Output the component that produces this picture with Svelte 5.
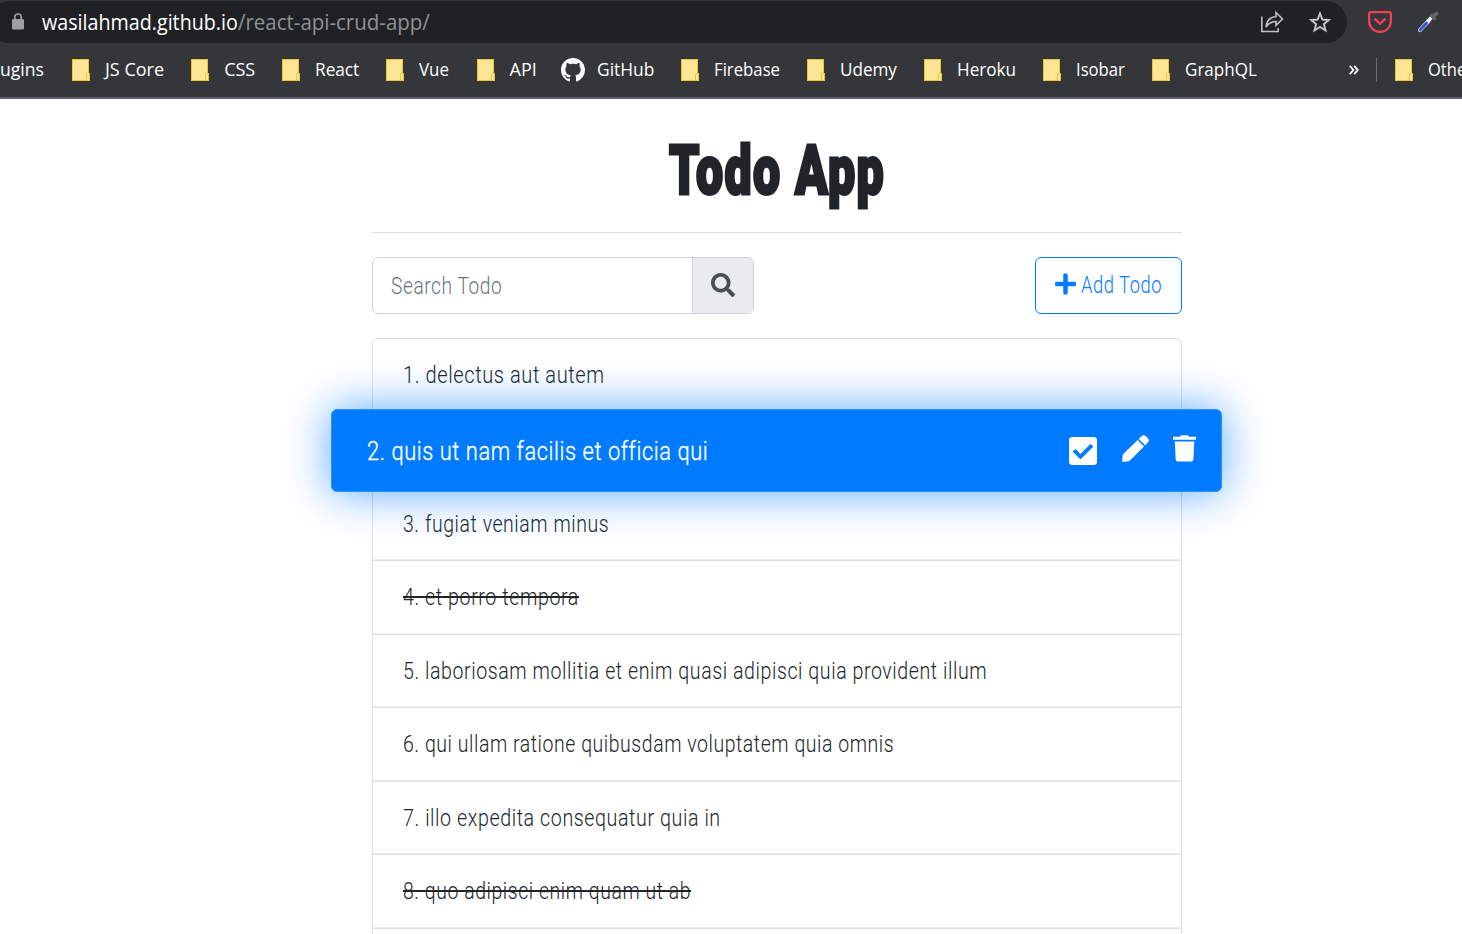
<script>
  const bookmarks = [
    { label: 'JS Core', w: 59 },
    { label: 'CSS', w: 31 },
    { label: 'React', w: 44 },
    { label: 'Vue', w: 30 },
    { label: 'API', w: 27 },
    { label: 'GitHub', w: 57, github: true },
    { label: 'Firebase', w: 66 },
    { label: 'Udemy', w: 57 },
    { label: 'Heroku', w: 59 },
    { label: 'Isobar', w: 49 },
    { label: 'GraphQL', w: 72 }
  ];

  const todos = [
    { text: '1. delectus aut autem', w: 202 },
    { text: '2. quis ut nam facilis et officia qui', w: 341, active: true },
    { text: '3. fugiat veniam minus', w: 206 },
    { text: '4. et porro tempora', w: 176, done: true },
    { text: '5. laboriosam mollitia et enim quasi adipisci quia provident illum', w: 584 },
    { text: '6. qui ullam ratione quibusdam voluptatem quia omnis', w: 491 },
    { text: '7. illo expedita consequatur quia in', w: 318 },
    { text: '8. quo adipisci enim quam ut ab', w: 288, done: true },
    { text: '', w: 0 }
  ];

  // Condenses a label horizontally so that it fills the given width.
  function fit(node, width) {
    const natural = node.offsetWidth;
    if (natural && width) node.style.transform = `scaleX(${width / natural})`;
    node.parentElement.style.width = `${width}px`;
  }
</script>

{#snippet label(text, w)}
  <span class="fit"><span class="fit-in" use:fit={w}>{text}</span></span>
{/snippet}

{#snippet folder()}
  <svg class="folder" width="18" height="22" viewBox="0 0 18 22">
    <path d="M0 0H17V14H18V22H0Z" fill="#ffe695" />
    <path d="M.5 0V21.5H17.5V14.5H15.5Q14.5 14.5 14.5 15.5V21M16.5 14V.5H0" fill="none" stroke="#eac435" />
  </svg>
{/snippet}

<div class="browser">
  <div class="toolbar">
    <div class="omnibox">
      <svg class="lock" width="12" height="17" viewBox="0 0 12 17">
        <rect y="6" width="12" height="10.5" rx="1.2" fill="#9aa0a6" />
        <path d="M2.8 7V4.2a3.2 3.2 0 0 1 6.400 0V7" fill="none" stroke="#9aa0a6" stroke-width="1.6" />
      </svg>
      <div class="url">
        {@render label('wasilahmad.github.io', 196)}<span class="path">{@render label('/react-api-crud-app/', 192)}</span>
      </div>
      <svg class="share" width="24" height="24" viewBox="0 0 24 24" fill="none" stroke="#bdbfc1" stroke-width="1.6">
        <path d="M1.800 6.500V21.500H18.200V18" />
        <path d="M16 2.500L22.500 9L16 15.300V11.500C11.500 11.500 8.500 13 6 17C6.500 11.500 9.500 7.200 16 6.500Z" />
      </svg>
      <svg class="star" width="22" height="22" viewBox="0 0 22 22" fill="none" stroke="#c6c8ca" stroke-width="1.9">
        <path d="M11 2.500L13.400 8.500L19.800 9L14.900 13.100L16.500 19.500L11 16L5.500 19.500L7.100 13.100L2.200 9L8.600 8.500Z" />
      </svg>
    </div>
    <svg class="pocket" width="24" height="22" viewBox="0 0 24 22" fill="none" stroke="#ef4056" stroke-width="2.200">
      <path d="M3 1.200H21Q22.900 1.200 22.900 3V10A10.900 10.900 0 0 1 1.100 10V3Q1.100 1.200 3 1.200Z" />
      <path d="M7.200 8.200L12 12.800L16.800 8.200" stroke-width="2.400" stroke-linecap="round" stroke-linejoin="round" />
    </svg>
    <svg class="dropper" width="22" height="22" viewBox="0 0 22 22" fill="none" stroke-linecap="round">
      <path d="M3 19L11.500 10" stroke="#c3c8d6" stroke-width="4.200" />
      <path d="M3.300 18.700L9.500 12.200" stroke="#3157d0" stroke-width="2.800" />
      <path d="M11.500 9.500L14 7" stroke="#eceef2" stroke-width="3.800" />
      <path d="M14.500 4.500L17.500 7.500M16.500 5L19.500 2.300" stroke="#626366" stroke-width="3.600" />
    </svg>
  </div>
  <div class="bookmarks">
    <span class="first">{@render label('ugins', 44)}</span>
    {#each bookmarks as b}
      <div class="bookmark">
        <span class="slot">
          {#if b.github}
            <svg width="24" height="24" viewBox="0 0 16 16" fill="#fff">
              <path d="M8 0C3.580 0 0 3.580 0 8c0 3.540 2.290 6.530 5.470 7.590.4.070.55-.17.55-.38 0-.19-.01-.82-.01-1.490-2.010.37-2.530-.49-2.690-.94-.09-.23-.48-.94-.82-1.130-.28-.15-.68-.52-.01-.53.63-.01 1.080.58 1.230.82.72 1.210 1.870.87 2.330.66.070-.52.28-.87.51-1.070-1.780-.2-3.640-.89-3.640-3.950 0-.87.31-1.590.82-2.150-.08-.2-.36-1.020.08-2.120 0 0 .67-.21 2.200.82.64-.18 1.320-.27 2-.27s1.360.09 2 .27c1.530-1.040 2.200-.82 2.200-.82.44 1.100.16 1.920.08 2.120.51.56.82 1.270.82 2.150 0 3.070-1.870 3.750-3.650 3.950.29.25.54.73.54 1.480 0 1.070-.01 1.930-.01 2.200 0 .21.15.46.55.38A8.010 8.010 0 0 0 16 8c0-4.420-3.580-8-8-8z" />
            </svg>
          {:else}{@render folder()}{/if}
        </span>
        {@render label(b.label, b.w)}
      </div>
    {/each}
    <svg class="more" width="10" height="10" viewBox="0 0 10 10" fill="none" stroke="#fff" stroke-width="1.800">
      <path d="M.8 .8L4.400 5L.8 9.200M5.200 .8L8.800 5L5.200 9.200" />
    </svg>
    <span class="divider"></span>
    <div class="bookmark other">
      <span class="slot">{@render folder()}</span>
      {@render label('Other bookmarks', 136)}
    </div>
  </div>
</div>

<main>
  <h1>{@render label('Todo App', 216)}</h1>
  <div class="controls">
    <div class="search">
      <div class="field">{@render label('Search Todo', 111)}</div>
      <div class="search-btn">
        <svg width="24" height="24" viewBox="0 0 512 512" fill="#495057">
          <path d="M505 442.700L405.300 343c-4.500-4.500-10.600-7-17-7H372c27.600-35.300 44-79.700 44-128C416 93.100 322.900 0 208 0S0 93.100 0 208s93.100 208 208 208c48.300 0 92.700-16.400 128-44v16.300c0 6.400 2.500 12.500 7 17l99.700 99.700c9.400 9.400 24.600 9.400 33.900 0l28.300-28.300c9.400-9.400 9.400-24.600.1-34zM208 336c-70.700 0-128-57.200-128-128 0-70.700 57.200-128 128-128 70.700 0 128 57.200 128 128 0 70.700-57.200 128-128 128z" />
        </svg>
      </div>
    </div>
    <div class="add">
      <svg width="21" height="24" viewBox="0 0 448 512" fill="#007bff">
        <path d="M416 208H272V64c0-17.670-14.330-32-32-32h-32c-17.670 0-32 14.330-32 32v144H32c-17.670 0-32 14.330-32 32v32c0 17.670 14.330 32 32 32h144v144c0 17.670 14.330 32 32 32h32c17.670 0 32-14.330 32-32V304h144c17.670 0 32-14.330 32-32v-32c0-17.670-14.330-32-32-32z" />
      </svg>
      {@render label('Add Todo', 81)}
    </div>
  </div>
  <div class="list">
    {#each todos as t}
      <div class="row" class:active={t.active} class:done={t.done}>
        {@render label(t.text, t.w)}
        {#if t.active}
          <div class="actions">
            <svg class="check" width="28" height="32" viewBox="0 0 448 512" fill="#fff">
              <path d="M400 480H48c-26.510 0-48-21.490-48-48V80c0-26.510 21.490-48 48-48h352c26.510 0 48 21.490 48 48v352c0 26.510-21.490 48-48 48zm-204.686-98.059l184-184c6.248-6.248 6.248-16.379 0-22.627l-22.627-22.627c-6.248-6.248-16.379-6.249-22.628 0L184 302.745l-70.059-70.059c-6.248-6.248-16.379-6.248-22.628 0l-22.627 22.627c-6.248 6.248-6.248 16.379 0 22.627l104 104c6.249 6.249 16.379 6.249 22.628.001z" />
            </svg>
            <svg class="pencil" width="27" height="27" viewBox="0 0 27 27" fill="#fff">
              <path d="M15.600 5L22 11.400L8.200 25.200Q7.200 26.200 5.800 26.300L.9 26.900Q.2 26.900 .2 26.200L.5 21Q.7 19.700 1.600 18.800Z" />
              <path d="M16.700 3.900L19.200 1.400Q21.700-.9 24.200 1.500L25.500 2.800Q27.900 5.300 25.600 7.800L23.100 10.300Z" />
            </svg>
            <svg class="trash" width="23" height="27" viewBox="0 0 23 27" fill="#fff">
              <path d="M0 1.700H7L8.200.3H14.800L16 1.700H23V4.800H0Z" />
              <path d="M1.800 6.500H21.300L20.400 24.400Q20.200 26.500 18.100 26.500H5Q2.900 26.500 2.700 24.400Z" />
            </svg>
          </div>
        {/if}
      </div>
    {/each}
  </div>
</main>

<style>
  :global(body) {
    margin: 0;
    background: #fff;
    overflow: hidden;
  }
  :global(#app) {
    height: 934px;
    overflow: hidden;
  }
  .fit {
    display: inline-block;
    white-space: nowrap;
    flex: none;
  }
  .fit-in {
    display: inline-block;
    transform-origin: 0 50%;
  }
  .browser {
    height: 99px;
    box-sizing: border-box;
    background: #35363a;
    border-bottom: 2px solid #606164;
    color: #fff;
    font-family: 'Open Sans', 'Noto Sans', sans-serif;
    overflow: hidden;
  }
  .toolbar {
    display: flex;
    align-items: center;
    height: 42px;
    padding-top: 1px;
  }
  .omnibox {
    display: flex;
    align-items: center;
    box-sizing: border-box;
    width: 1359px;
    height: 42px;
    margin-left: -12px;
    padding-left: 24px;
    border-radius: 21px;
    background: #202124;
    flex: none;
  }
  .lock {
    margin-bottom: 1px;
  }
  .url {
    display: flex;
    width: 1230px;
    padding-left: 18px;
    box-sizing: border-box;
    font-size: 21px;
    line-height: 42px;
    height: 42px;
    flex: none;
  }
  .path {
    color: #8f9194;
  }
  .share {
    margin-left: 6px;
    flex: none;
  }
  .star {
    margin-left: 25px;
    flex: none;
  }
  .pocket {
    margin-left: 21px;
  }
  .dropper {
    margin-left: 25px;
  }
  .bookmarks {
    display: flex;
    align-items: center;
    height: 54px;
    font-size: 18px;
    line-height: 52px;
  }
  .bookmarks .fit {
    padding-bottom: 2px;
  }
  .first {
    width: 44px;
    margin-right: 25px;
    flex: none;
  }
  .bookmark {
    display: flex;
    align-items: center;
    gap: 12px;
    margin-right: 24.150px;
    flex: none;
  }
  .slot {
    display: flex;
    justify-content: center;
    width: 24px;
    flex: none;
  }
  .more {
    margin: 0 17px 0 auto;
    flex: none;
  }
  .divider {
    width: 1px;
    height: 24px;
    background: #6b6c6f;
    margin-right: 15px;
    flex: none;
  }
  .other {
    width: 70px;
    margin-right: 0;
  }

  main {
    width: 810px;
    margin-left: 372px;
    color: #212529;
    font-family: Roboto, 'Open Sans', sans-serif;
    font-weight: 300;
    font-size: 24px;
    letter-spacing: 0.7px;
  }
  h1 {
    display: flex;
    justify-content: center;
    box-sizing: border-box;
    height: 134px;
    margin: 0 0 24px;
    padding-top: 24px;
    border-bottom: 1px solid #dfe0e1;
    font-size: 69px;
    line-height: 96px;
    font-weight: 900;
    letter-spacing: 2px;
    -webkit-text-stroke: 3px #212529;
  }
  .controls {
    display: flex;
    justify-content: space-between;
    height: 57px;
    margin-bottom: 24px;
    line-height: 55px;
  }
  .search {
    display: flex;
    box-sizing: border-box;
    width: 382px;
    border: 1px solid #ced4da;
    border-radius: 6px;
    overflow: hidden;
  }
  .field {
    width: 319px;
    box-sizing: border-box;
    padding-left: 18px;
    padding-top: 1px;
    color: #6c757d;
  }
  .search-btn {
    display: flex;
    flex: 1;
    align-items: center;
    justify-content: center;
    padding-bottom: 1px;
    background: #e9ecef;
    border-left: 1px solid #ced4da;
  }
  .add {
    display: flex;
    align-items: center;
    gap: 5px;
    box-sizing: border-box;
    width: 147px;
    padding-left: 19px;
    border: 1px solid #007bff;
    border-radius: 6px;
    color: #007bff;
  }
  .add svg {
    margin-bottom: 3px;
  }
  .list {
    border: 1px solid #dfdfdf;
    border-radius: 6px 6px 0 0;
  }
  .row {
    display: flex;
    align-items: center;
    box-sizing: border-box;
    height: 73.500px;
    padding-left: 30px;
    border-bottom: 1px solid #dfdfdf;
    box-shadow: inset 0 -1px #efefef;
  }
  .active {
    position: relative;
    z-index: 1;
    height: 83px;
    margin: -4px -41px -4px -42px;
    padding: 2px 25px 0 35px;
    justify-content: space-between;
    background: #007bff;
    color: #fff;
    border: 1px solid #2b91ff;
    border-radius: 6px;
    box-shadow: 0 0 46px rgba(0, 123, 255, 0.66);
    font-size: 26.400px;
    -webkit-text-stroke: 0.35px #fff;
  }
  .done .fit {
    position: relative;
  }
  .done .fit::after {
    content: '';
    position: absolute;
    left: 0;
    right: 0;
    top: 13px;
    height: 2px;
    background: #212529;
  }
  .actions {
    display: flex;
    align-items: center;
  }
  .pencil {
    margin: 0 24px 5px 25px;
  }
  .trash {
    margin-bottom: 5px;
  }
</style>
